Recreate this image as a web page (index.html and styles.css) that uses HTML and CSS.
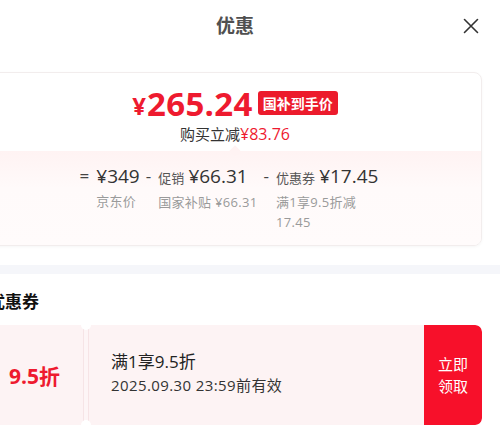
FILE: index.html
```html
<!DOCTYPE html>
<html lang="zh-CN">
<head>
<meta charset="utf-8">
<link rel="stylesheet" href="styles.css">
</head>
<body>
<div class="modal">
  <header class="head">
    <span></span>
    <h1 class="title">优惠</h1>
    <button class="close" aria-label="关闭">
      <svg width="16" height="16" viewBox="0 0 16 16"><path d="M1.5 1.5 L14.5 14.5 M14.5 1.5 L1.5 14.5" stroke="#333" stroke-width="1.6" stroke-linecap="round" fill="none"/></svg>
    </button>
  </header>

  <section class="card">
    <div class="card-top">
      <div class="price-line">
        <span class="yen">¥</span><span class="amount">265.24</span><span class="tag">国补到手价</span>
      </div>
      <div class="save">购买立减<span class="red">¥83.76</span></div>
    </div>
    <div class="card-bottom">
      <span class="pointer"></span>
      <div class="calc">
        <div class="item">
          <span class="op">=</span>
          <div class="blk">
            <div class="main"><span class="num">¥349</span></div>
            <div class="sub">京东价</div>
          </div>
        </div>
        <div class="item">
          <span class="op">-</span>
          <div class="blk">
            <div class="main"><span class="lbl">促销</span> <span class="num">¥66.31</span></div>
            <div class="sub">国家补贴 ¥66.31</div>
          </div>
        </div>
        <div class="item">
          <span class="op">-</span>
          <div class="blk">
            <div class="main"><span class="lbl">优惠券</span> <span class="num">¥17.45</span></div>
            <div class="sub narrow">满1享9.5折减 17.45</div>
          </div>
        </div>
      </div>
    </div>
  </section>

  <div class="band"></div>

  <h2 class="sec-title">优惠券</h2>

  <div class="coupon">
    <div class="c-left"><span class="disc">9.5折</span></div>
    <div class="c-split"><i class="dot top"></i><i class="dot bot"></i></div>
    <div class="c-mid">
      <div class="c-name">满1享9.5折</div>
      <div class="c-date">2025.09.30 23:59前有效</div>
    </div>
    <button class="c-btn">立即<br>领取</button>
  </div>
</div>
</body>
</html>
```

FILE: styles.css
```css
* { box-sizing: border-box; }
html, body { margin: 0; padding: 0; background: #fff; overflow: hidden; }
body {
  font-family: "Open Sans", "Noto Sans CJK SC", sans-serif;
  color: #222;
}
.modal {
  width: 530px;
  margin-left: -30px;
}
.head {
  display: grid;
  grid-template-columns: 1fr auto 1fr;
  align-items: center;
  height: 52px;
}
.title {
  margin: 0;
  font-size: 19px;
  font-weight: 700;
  color: #505050;
  line-height: 52px;
}
.close {
  justify-self: end;
  margin-right: 21px;
  background: none;
  border: 0;
  padding: 0;
  width: 16px;
  height: 16px;
  display: flex;
}
.card {
  margin: 20px 18px 0;
  border: 1px solid #f2eded;
  border-radius: 8px;
  box-shadow: 0 1px 3px rgba(0,0,0,0.04);
  overflow: hidden;
}
.card-top {
  padding: 11px 0 7px;
  text-align: center;
}
.price-line {
  display: flex;
  justify-content: center;
  align-items: center;
  height: 38px;
  color: #ee1a2f;
}
.yen { font-size: 24px; font-weight: 700; margin-top: 6px; margin-right: 1px; line-height: 1; }
.amount { font-size: 33px; font-weight: 700; line-height: 1; letter-spacing: 0.3px; }
.tag {
  margin-left: 5px;
  background: #ec1b2c;
  color: #fff;
  font-family: "Noto Sans CJK SC", sans-serif;
  font-size: 14px;
  font-weight: 700;
  height: 24px;
  line-height: 24px;
  padding: 0 5px;
  border-radius: 3px;
}
.save {
  font-size: 15px;
  line-height: 20px;
  margin-top: 2px;
  color: #333;
}
.red { color: #ee1a2f; font-size: 16px; }
.card-bottom {
  position: relative;
  background: linear-gradient(#fff3f3, #fffafa 40%, #fffbfb);
  padding: 13px 0 13px;
}
.pointer {
  position: absolute;
  top: -4px;
  left: 50%;
  width: 8px;
  height: 8px;
  margin-left: -4px;
  background: #fff3f3;
  transform: rotate(45deg);
}
.calc {
  display: flex;
  justify-content: center;
  gap: 6px;
  padding-right: 12px;
}
.item { display: flex; gap: 7px; }
.op { font-size: 17px; line-height: 24px; color: #444; }
.main { line-height: 24px; white-space: nowrap; color: #333; }
.num { font-size: 19px; font-weight: 500; }
.lbl { font-size: 13px; color: #555; }
.sub {
  font-size: 13px;
  line-height: 20px;
  color: #9a9a9a;
  margin-top: 2px;
  letter-spacing: 0.3px;
}
.narrow { max-width: 100px; }
.band {
  height: 9px;
  background: #f5f6fa;
  margin-top: 19px;
}
.sec-title {
  margin: 0;
  padding: 0 18px;
  font-size: 17px;
  font-weight: 700;
  line-height: 56px;
  height: 51px;
  color: #111;
}
.coupon {
  margin: 0 18px;
  height: 100px;
  display: flex;
  background: #fdf3f4;
  border-radius: 6px;
  overflow: hidden;
}
.c-left {
  width: 96px;
  display: flex;
  align-items: center;
  justify-content: center;
  border-right: 1px solid #f6e4e6;
}
.disc {
  color: #ee1a2f;
  font-size: 21px;
  font-weight: 700;
  padding-right: 2px;
}
.c-split {
  position: relative;
  width: 5px;
  background: #fdf5f6;
  border-right: 1px solid #f6e4e6;
}
.dot {
  position: absolute;
  left: -3px;
  width: 10px;
  height: 10px;
  border-radius: 50%;
  background: #fff;
}
.dot.top { top: -5px; }
.dot.bot { bottom: -5px; }
.c-mid {
  flex: 1;
  display: flex;
  flex-direction: column;
  justify-content: center;
  padding-left: 22px;
  padding-bottom: 5px;
}
.c-name { font-size: 17px; line-height: 25px; color: #222; }
.c-date { font-size: 15px; line-height: 23px; color: #333; letter-spacing: 0.4px; }
.c-btn {
  width: 58px;
  border: 0;
  background: #f7102a;
  color: #fff;
  font-family: "Noto Sans CJK SC", sans-serif;
  font-size: 15px;
  line-height: 22px;
  padding: 0;
  border-radius: 0 7px 7px 0;
}
```
